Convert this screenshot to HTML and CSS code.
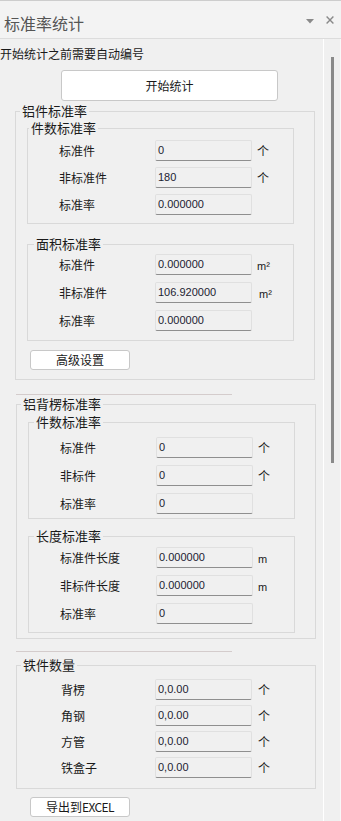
FILE: index.html
```html
<!DOCTYPE html>
<html lang="zh-CN">
<head>
<meta charset="utf-8">
<title>标准率统计</title>
<link rel="stylesheet" href="styles.css">
</head>
<body>
<div class="titlebar">
  <span class="title">标准率统计</span>
  <svg class="ico-menu" width="8" height="5" viewBox="0 0 8 5"><polygon points="0,0 8,0 4,4.5" fill="#8a8a8a"/></svg>
  <svg class="ico-close" width="8" height="8" viewBox="0 0 8 8"><path d="M0.6 0.6L7.4 7.4M7.4 0.6L0.6 7.4" stroke="#8a8a8a" stroke-width="1.4" fill="none"/></svg>
</div>
<div class="main">
  <div class="panel">
    <p class="note">开始统计之前需要自动编号</p>
    <button class="btn btn-start">开始统计</button>

    <fieldset class="group group-al">
      <legend>铝件标准率</legend>
      <fieldset class="sub sub-count1">
        <legend>件数标准率</legend>
        <div class="rows rows-count1">
          <span class="lbl">标准件</span><span class="field">0</span><span class="unit">个</span>
          <span class="lbl">非标准件</span><span class="field">180</span><span class="unit">个</span>
          <span class="lbl">标准率</span><span class="field">0.000000</span><span class="unit"></span>
        </div>
      </fieldset>
      <fieldset class="sub sub-area">
        <legend>面积标准率</legend>
        <div class="rows rows-area">
          <span class="lbl">标准件</span><span class="field">0.000000</span><span class="unit unit-m">m²</span>
          <span class="lbl">非标准件</span><span class="field">106.920000</span><span class="unit unit-m unit-shift">m²</span>
          <span class="lbl">标准率</span><span class="field">0.000000</span><span class="unit"></span>
        </div>
      </fieldset>
      <button class="btn btn-small btn-adv">高级设置</button>
    </fieldset>

    <div class="sep sep-1"></div>

    <fieldset class="group group-bk">
      <legend>铝背楞标准率</legend>
      <fieldset class="sub sub-count2">
        <legend>件数标准率</legend>
        <div class="rows rows-count2">
          <span class="lbl">标准件</span><span class="field">0</span><span class="unit">个</span>
          <span class="lbl">非标件</span><span class="field">0</span><span class="unit">个</span>
          <span class="lbl">标准率</span><span class="field">0</span><span class="unit"></span>
        </div>
      </fieldset>
      <fieldset class="sub sub-len">
        <legend>长度标准率</legend>
        <div class="rows rows-len">
          <span class="lbl">标准件长度</span><span class="field">0.000000</span><span class="unit unit-m">m</span>
          <span class="lbl">非标件长度</span><span class="field">0.000000</span><span class="unit unit-m">m</span>
          <span class="lbl">标准率</span><span class="field">0</span><span class="unit"></span>
        </div>
      </fieldset>
    </fieldset>

    <div class="sep sep-2"></div>

    <fieldset class="group group-fe">
      <legend>铁件数量</legend>
      <div class="rows rows-fe">
        <span class="lbl">背楞</span><span class="field">0,0.00</span><span class="unit">个</span>
        <span class="lbl">角钢</span><span class="field">0,0.00</span><span class="unit">个</span>
        <span class="lbl">方管</span><span class="field">0,0.00</span><span class="unit">个</span>
        <span class="lbl">铁盒子</span><span class="field">0,0.00</span><span class="unit">个</span>
      </div>
    </fieldset>

    <button class="btn btn-small btn-export">导出到<span class="latin">EXCEL</span></button>
  </div>
  <div class="scroll"><div class="thumb"></div></div>
</div>
</body>
</html>
```

FILE: styles.css
```css
html, body {
  margin: 0;
  padding: 0;
}

body {
  width: 341px;
  height: 821px;
  overflow: hidden;
  background: #f0f0f0;
  font-family: "Noto Sans CJK SC", sans-serif;
  font-size: 12px;
  color: #1a1a1a;
}

/* ---------- title bar ---------- */
.titlebar {
  box-sizing: border-box;
  height: 39px;
  display: flex;
  align-items: center;
  padding: 0 7px 0 4px;
  background: #f3f3f3;
  border-top: 1px solid #cdcdcd;
  border-bottom: 1px solid #dcdcdc;
}

.title {
  flex: 1;
  font-size: 16px;
  line-height: 20px;
  color: #555;
  margin-top: 6px;
}

.ico-menu {
  margin-top: 3px;
  margin-right: 12px;
}

.ico-close {
  margin-top: 1px;
}

/* ---------- main area ---------- */
.main {
  display: flex;
  height: 782px;
}

.panel {
  box-sizing: border-box;
  width: 323px;
  padding-top: 7px;
}

.scroll {
  box-sizing: border-box;
  width: 18px;
  border-left: 1px solid #ffffff;
  border-right: 1px solid #f8f8f8;
}

.thumb {
  width: 3px;
  height: 406px;
  margin: 18px 0 0 7px;
  background: #8a8a8a;
}

.note {
  margin: 0;
  font-size: 12px;
  line-height: 16px;
}

/* ---------- buttons ---------- */
.btn {
  display: block;
  box-sizing: border-box;
  padding: 0;
  background: #ffffff;
  border: 1px solid #c8c8c8;
  border-radius: 3px;
  font-family: "Noto Sans CJK SC", sans-serif;
  font-size: 12px;
  line-height: 16px;
  color: #1a1a1a;
}

.btn-start {
  width: 217px;
  height: 31px;
  margin: 8px 0 0 61px;
}

.btn-small {
  width: 100px;
  height: 20px;
}

.btn-adv {
  margin: 9px 0 9px 14px;
}

.btn-export {
  margin: 8px 0 0 30px;
}

.latin {
  letter-spacing: -0.6px;
}

/* ---------- group boxes ---------- */
fieldset {
  margin: 0;
  padding: 0;
  min-width: 0;
  border: 1px solid #d9d9d9;
}

legend {
  padding: 0 2px;
  font-size: 13px;
  line-height: 14px;
}

.group {
  box-sizing: border-box;
  width: 300px;
}

.group > legend {
  margin-left: 4px;
}

.group-al {
  margin: 3px 0 0 15px;
}

.group-bk {
  margin: 2px 0 0 16px;
}

.group-fe {
  margin: 6px 0 0 16px;
}

.sub {
  margin-left: 11px;
  margin-right: 20px;
}

.sub > legend {
  margin-left: 5px;
}

.sub-count1 {
  margin-top: 3px;
}

.sub-count1 > legend {
  margin-left: 1px;
}

.sub-area {
  margin-top: 13px;
}

.sub-area > legend {
  margin-left: 6px;
}

.sub-count2 {
  margin-top: 4px;
}

.sub-len {
  margin-top: 10px;
  margin-bottom: 5px;
}

.sep {
  width: 216px;
  height: 0;
  margin-left: 16px;
  border-top: 1px solid #d4cccc;
}

.sep-1 {
  margin-top: 14px;
}

.sep-2 {
  margin-top: 12px;
}

/* ---------- rows ---------- */
.rows {
  display: grid;
  grid-template-columns: 96px 97px auto;
  align-items: center;
}

.rows-count1 {
  padding: 5px 0 8px 31px;
  row-gap: 6px;
}

.rows-area {
  padding: 3px 0 9px 31px;
  row-gap: 7px;
}

.rows-count2 {
  padding: 8px 0 4px 31px;
  row-gap: 7px;
}

.rows-len {
  padding: 4px 0 8px 31px;
  row-gap: 7px;
}

.rows-fe {
  grid-template-columns: 94px 97px auto;
  padding: 7px 0 10px 44px;
  row-gap: 5px;
}

.rows-fe .unit {
  margin-left: 6px;
}

.lbl {
  line-height: 21px;
  color: #1a1a1a;
}

.field {
  box-sizing: border-box;
  height: 21px;
  padding: 1px 0 0 2px;
  background: #f0f0f0;
  border: 1px solid #e0e0e0;
  border-bottom-color: #8f8f8f;
  border-radius: 2px;
  font-family: "Liberation Sans", sans-serif;
  font-size: 11px;
  line-height: 17px;
  color: #1c1c30;
}

.unit {
  margin-left: 5px;
  font-size: 12px;
  line-height: 21px;
  height: 21px;
  color: #1a1a1a;
}

.unit-m {
  box-sizing: border-box;
  font-family: "Liberation Sans", sans-serif;
  font-size: 11px;
  line-height: 18px;
  padding-top: 3px;
}

.unit-shift {
  padding-left: 2px;
}
```
